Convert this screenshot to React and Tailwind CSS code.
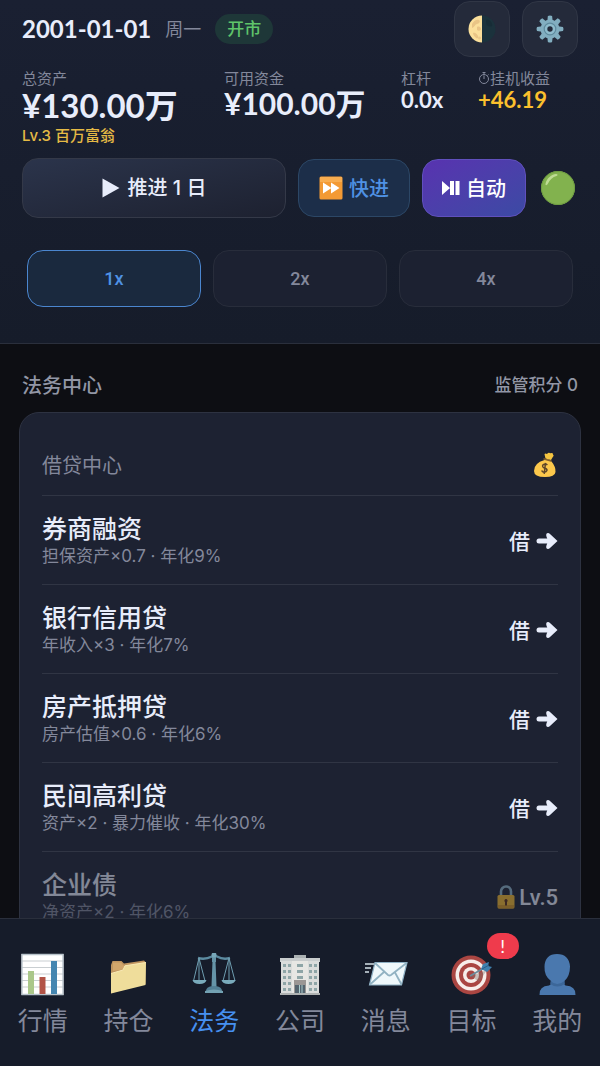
import { useState } from 'react';
import clsx from 'clsx';

function MoonIcon() {
    return (
        <svg viewBox="0 0 28 28" className="w-7 h-7" aria-hidden="true">
            <circle cx="14" cy="14" r="13.500" fill="#1b323c" />
            <path d="M14 .5a13.500 13.500 0 0 0 0 27z" fill="#fbdf9b" />
            <path d="M4 9c2-4 5-5 7-4s0 4-2 4-2 3-5 4zM9 12c2-1 4 0 4 2s-3 2-4 1zM5 18c2-1 4 1 5 3s-1 3-2 2-3-3-3-5z" fill="#e9c486" />
            <circle cx="11.500" cy="23" r="1.500" fill="#ecc98a" />
            <path d="M18 5c3-1 5 1 6 4s-2 3-4 2-2-4-2-6z" fill="#172c36" />
        </svg>
    );
}

function GearIcon() {
    return (
        <svg viewBox="0 0 28 28" className="w-7 h-7" aria-hidden="true">
            <g fill="#82aec0">
                {[0, 45, 90, 135, 180, 225, 270, 315].map(deg => (
                    <path key={deg} d="M11.300 6 11.900 1Q14 0 16.100 1L16.700 6z" transform={`rotate(${deg} 14 14)`} />
                ))}
                <circle cx="14" cy="14" r="9.500" />
            </g>
            <circle cx="14" cy="14" r="5.800" fill="#8fbccd" stroke="#5f8b9e" strokeWidth="1.200" />
            <circle cx="14" cy="14" r="2.700" fill="#242b3b" />
        </svg>
    );
}

function StopwatchIcon() {
    return (
        <svg viewBox="0 0 12 14" className="w-3 h-3.5" fill="none" stroke="currentColor" strokeWidth="1" aria-hidden="true">
            <circle cx="6" cy="8" r="4.500" />
            <path d="M6 8V4.500M6 3.500V1.500M4.500 1.500h3M9.500 4.500l1-1" />
        </svg>
    );
}

function FastForwardIcon() {
    return (
        <svg viewBox="0 0 24 24" className="w-6 h-6" aria-hidden="true">
            <rect x=".5" y=".5" width="23" height="23" rx="1.500" fill="#f39a34" />
            <path d="M1 1h22v5H1z" fill="#f8ad50" />
            <path d="M4 6.500 12.500 12 4 17.500zM12 6.500 20.500 12 12 17.500z" fill="#fff" />
        </svg>
    );
}

function PlayPauseIcon() {
    return (
        <svg viewBox="0 0 18 14" className="w-[18px] h-3.5" fill="currentColor" aria-hidden="true">
            <path d="M0 0 8 7 0 14zM8 0h4v14H8zM13.500 0h4v14h-4z" />
        </svg>
    );
}

function GreenDot() {
    return (
        <svg viewBox="0 0 36 36" className="w-9 h-9" role="img" aria-label="运行中">
            <circle cx="18" cy="18" r="17" fill="#82b24e" />
            <circle cx="18" cy="18" r="16.500" fill="none" stroke="#6f9d42" />
            <path d="M5.500 14C6.500 8.500 11 4.500 16 4c2 0 2 1.500.5 2-4 1.200-6.500 3.500-8.500 7.500-1 2-2.800 2.300-2.500.5z" fill="#bedc94" />
        </svg>
    );
}

function MoneyBagIcon() {
    return (
        <svg viewBox="0 0 26 26" className="w-[26px] h-[26px]" role="img" aria-label="资金">
            <path d="M13.500 6.500 12.500 2.200Q13 1 15 2q1.500-2 3.500-.7 2.500-.8 2.500 1.200 1.500 1-.2 2.500L19 8z" fill="#f5c541" />
            <path d="M12.500 8Q17 6 19.500 9.500 24 15 23.500 20q-.5 5-10.500 5-11 0-11-6 0-8 10.500-11z" fill="#fcc84c" />
            <path d="m12 7 7 2" stroke="#85602a" strokeWidth="1.500" strokeLinecap="round" />
            <path d="M15.300 13.200q-1-1.500-3-1-2.200.7-1.500 2.500.5 1.200 2.300 1.500 2.200.5 1.800 2.400-.7 1.900-3 1.600-1.700-.2-2.200-1.700M13.500 10.800l-1.300 11" fill="none" stroke="#60472a" strokeWidth="1.500" />
        </svg>
    );
}

function LockIcon() {
    return (
        <svg viewBox="0 0 18 24" className="w-[18px] h-6" aria-hidden="true">
            <path d="M4 11V6.500a5 5 0 0 1 10 0V11" fill="none" stroke="#8eb4c8" strokeWidth="2.600" />
            <rect x=".5" y="10" width="17" height="13.500" rx="1.500" fill="#f5b92e" />
            <path d="M1 20h16v2q0 1.500-1.500 1.500h-13Q1 23.500 1 22z" fill="#d99a22" />
            <path d="M9 14a1.700 1.700 0 0 1 1 3v3.500H8V17a1.700 1.700 0 0 1 1-3z" fill="#5c2f16" />
        </svg>
    );
}

function ArrowIcon() {
    return (
        <svg viewBox="0 0 22 18" className="w-[22px] h-[18px]" aria-hidden="true">
            <path d="M3 9h10" stroke="currentColor" strokeWidth="5" strokeLinecap="round" />
            <path d="M10.300 4Q9.800 1.200 12 1q1 0 2 1l7.500 7-7.500 7q-1 1-2 1-2.200-.2-1.700-3L12 9z" fill="currentColor" />
        </svg>
    );
}

function ChartIcon() {
    return (
        <>
            <path d="M.5 1h42v41H.5z" fill="#fff" />
            <path d="M1 8h41M1 14.500h41M1 21h41M1 27.500h41M1 34h41" stroke="#c9ced1" strokeWidth="1" />
            <path d="M1 1.500h41v40H1z" fill="none" stroke="#b8c3cb" strokeWidth="1.300" />
            <path d="M7 18h6v23H7z" fill="#aac78a" />
            <path d="M18.500 24h6v17h-6z" fill="#b25447" />
            <path d="M30 8h6v33h-6z" fill="#4586b0" />
        </>
    );
}

function FolderIcon() {
    return (
        <>
            <path d="M4 12 5.500 8h9L17 10.500 37 7.500 38.500 9v22L4 40z" fill="#bf9560" />
            <path d="M6 9.500h8l2.500 3L37 9v4L6 18z" fill="#d1a66c" />
            <path d="M4 20.500 16 17l2-4.200L39 9.500 38.500 32 4 40.500z" fill="#efdd9b" />
            <path d="M4 20.500 16 17l2-4.200L39 9.500" fill="none" stroke="#f8eab5" />
        </>
    );
}

function ScalesIcon() {
    return (
        <>
            <path d="M6 5Q13 7 20 3.500q3-1 5 0Q31 7 38 5" fill="none" stroke="#5c8ba0" strokeWidth="2.500" />
            <path d="M20 2h4v7h-4zM20.500 8h3l1 25h-5z" fill="#6594a8" />
            <circle cx="22" cy="2" r="2.500" fill="#78a8b9" />
            <path d="M7 5 1.500 28M7 5l6 23M7 5v22M37 5l-6 23M37 5l6 23M37 5v22" fill="none" stroke="#6e9db0" strokeWidth="1" />
            <path d="M.5 27h14q-1 4-7 4t-7-4zM29.500 27h14q-1 4-7 4t-7-4z" fill="#79aabb" />
            <path d="M14 38q0-4 6-5h4q6 1 6 5z" fill="#527f95" />
            <path d="M13 38q9-3 18 0v2H13z" fill="#73a1b2" />
        </>
    );
}

function OfficeIcon() {
    return (
        <g transform="translate(1 1)">
            <path d="M15 1h12v4H15z" fill="#aab0b2" />
            <path d="M1 4h40v4H1z" fill="#c8cccd" />
            <path d="M2 7h38v33H2z" fill="#dadcdb" />
            <path d="M13 7h16v33H13z" fill="#e7e7e4" />
            {[10, 16, 22, 28, 34].map(y => (
                <path key={y} d={`M4 ${y}h3v3H4zM9 ${y}h3v3H9zM18 ${y}h6v3h-6zM30 ${y}h3v3h-3zM35 ${y}h3v3h-3z`} fill="#8ea5a7" />
            ))}
            <path d="M15 26h12v14H15z" fill="#9a9694" />
            <path d="M16 31h10v9H16z" fill="#53636e" />
            <path d="M20.500 31v9M23 31v9" stroke="#acc" />
            <path d="M1 39h40v2H1z" fill="#aeb1b1" />
        </g>
    );
}

function MailIcon() {
    return (
        <>
            <path d="M1 11h9M1 15h6M1 19h4" stroke="#d5e1e8" strokeWidth="1.400" />
            <path d="M11 9.500h32L37.500 32h-32z" fill="#eff8fb" stroke="#8eb0c4" strokeWidth="1.200" />
            <path d="m11 10 13 12q1.500 1 3 0L42.500 10M6 31.500 20 19M37.500 31.500 31 19.500" fill="none" stroke="#91b2c2" strokeWidth="1.800" />
        </>
    );
}

function TargetIcon() {
    return (
        <>
            <circle cx="22" cy="22" r="19.500" fill="#aa4642" />
            <circle cx="22" cy="22" r="15.500" fill="#f7eeea" />
            <circle cx="22" cy="22" r="12" fill="#aa4642" />
            <circle cx="22" cy="22" r="8" fill="#f7eeea" />
            <circle cx="22" cy="22" r="4.500" fill="#aa4642" />
            <path d="m22 23 8 6 8-12z" fill="#81746f" opacity=".4" />
            <path d="m21 23 14-8" stroke="#6c8d9c" strokeWidth="2" />
            <path d="m32 16 2-5 6-2-1 4 4 1-5 5z" fill="#3f80ad" />
            <path d="m33 16 7-4" stroke="#285e89" />
        </>
    );
}

function PersonIcon() {
    return (
        <g transform="translate(1 1)">
            <path d="M21 0q12 0 13 12.500Q34 22 28.500 27q-1 3 1 4.500Q40 32 39.500 41h-36Q3 32 13 31.500q3-1.500 2-4.500Q8 22 8.500 12.500 9 0 21 0z" fill="#4a78ae" />
            <path d="M14.500 27q6.500 6 14 0l.3 3q-7.300 5-14.600 0z" fill="#3c6799" />
        </g>
    );
}

const speeds = ['1x', '2x', '4x'];

const loans = [
    { name: '券商融资', desc: '担保资产×0.7 · 年化9%' },
    { name: '银行信用贷', desc: '年收入×3 · 年化7%' },
    { name: '房产抵押贷', desc: '房产估值×0.6 · 年化6%' },
    { name: '民间高利贷', desc: '资产×2 · 暴力催收 · 年化30%' },
    { name: '企业债', desc: '净资产×2 · 年化6%', locked: 'Lv.5' },
];

const tabs = [
    { id: 'market', label: '行情', icon: ChartIcon },
    { id: 'holdings', label: '持仓', icon: FolderIcon },
    { id: 'legal', label: '法务', icon: ScalesIcon },
    { id: 'company', label: '公司', icon: OfficeIcon },
    { id: 'news', label: '消息', icon: MailIcon },
    { id: 'goals', label: '目标', icon: TargetIcon, badge: '!' },
    { id: 'me', label: '我的', icon: PersonIcon },
];

function Header() {
    const [speed, setSpeed] = useState('1x');

    return (
        <header className="shrink-0 border-b border-[#2a2f3c] bg-linear-to-b from-[#1a2032] to-[#161c2a] px-[22px] pt-px pb-9">
            <div className="flex items-center">
                <h1 className="text-2xl font-bold">2001-01-01</h1>
                <span className="ml-3.5 text-lg text-[#83889b]">周一</span>
                <span className="ml-3.5 rounded-full bg-[#1e3738] px-3 py-0.5 text-[17px] leading-[26px] font-medium text-[#5fc46a]">开市</span>
                <div className="ml-auto flex gap-3">
                    <button type="button" aria-label="切换主题" className="flex size-14 items-center justify-center rounded-2xl border border-[#303645] bg-[#242a3a]">
                        <MoonIcon />
                    </button>
                    <button type="button" aria-label="设置" className="flex size-14 items-center justify-center rounded-2xl border border-[#303645] bg-[#242a3a]">
                        <GearIcon />
                    </button>
                </div>
            </div>

            <dl className="mt-[11px] grid grid-cols-[202fr_177fr_77fr_100fr] whitespace-nowrap font-bold">
                <div>
                    <dt className="text-[15px] leading-5 font-normal text-[#83889b]">总资产</dt>
                    <dd className="text-[33px] leading-[34px]">¥130.00万</dd>
                    <dd className="mt-1 font-['Inter','Noto_Sans_CJK_SC',sans-serif] text-[15px] leading-5 font-medium text-[#e5ba45]">Lv.3 百万富翁</dd>
                </div>
                <div>
                    <dt className="text-[15px] leading-5 font-normal text-[#83889b]">可用资金</dt>
                    <dd className="text-[30px] leading-[30px]">¥100.00万</dd>
                </div>
                <div>
                    <dt className="text-[15px] leading-5 font-normal text-[#83889b]">杠杆</dt>
                    <dd className="text-[22px] leading-6">0.0x</dd>
                </div>
                <div>
                    <dt className="flex items-center text-[15px] leading-5 font-normal text-[#83889b]">
                        <StopwatchIcon />
                        挂机收益
                    </dt>
                    <dd className="text-[22px] leading-6 text-[#fbc02d]">+46.19</dd>
                </div>
            </dl>

            <div className="mt-3 flex items-center gap-3 text-xl font-medium">
                <button type="button" className="flex h-[60px] flex-1 items-center justify-center gap-2 rounded-2xl border border-[#343948] bg-linear-to-br from-[#2b344b] to-[#1d2130]">
                    <svg viewBox="0 0 18 20" className="w-[18px] h-5" fill="currentColor" aria-hidden="true">
                        <path d="M.5.5 17.500 10 .5 19.500z" />
                    </svg>
                    <span className="font-['Inter','Noto_Sans_CJK_SC',sans-serif]">推进 1 日</span>
                </button>
                <button type="button" className="flex h-[58px] items-center gap-1.5 rounded-2xl border border-[#2c4766] bg-[#1c2e49] px-5 text-[#4f91e3]">
                    <FastForwardIcon />
                    快进
                </button>
                <button type="button" className="flex h-[58px] items-center gap-1.5 rounded-2xl border border-[#6050bd] bg-linear-to-br from-[#5832b0] to-[#3b4aa4] px-[19px] text-white">
                    <PlayPauseIcon />
                    自动
                </button>
                <div className="px-0.5">
                    <GreenDot />
                </div>
            </div>

            <div className="mt-8 flex gap-3 px-[5px]">
                {speeds.map(s => (
                    <button
                        key={s}
                        type="button"
                        aria-pressed={s === speed}
                        onClick={() => setSpeed(s)}
                        className={clsx(
                            "h-[57px] flex-1 rounded-2xl border font-['Roboto',sans-serif] text-lg font-medium",
                            s === speed ? 'border-[#4b86cf] bg-[#1a293e] text-[#4f91e3]' : 'border-[#282d3b] bg-[#1c2131] text-[#83889b]'
                        )}
                    >
                        {s}
                    </button>
                ))}
            </div>
        </header>
    );
}

function LoanRow({ loan }) {
    return (
        <li className="border-t border-[#303544]">
            <div className={clsx('flex items-center justify-between pt-[17px] pb-[15px]', loan.locked && 'opacity-50')}>
                <div>
                    <h3 className="text-[25px] leading-[30px] font-medium">{loan.name}</h3>
                    <p className="font-['Inter','Noto_Sans_CJK_SC',sans-serif] text-[17px] leading-[26px] text-[#83889b]">{loan.desc}</p>
                </div>
                {loan.locked ? (
                    <span className="flex items-center gap-1 font-['Roboto',sans-serif] text-[22px] font-medium">
                        <LockIcon />
                        {loan.locked}
                    </span>
                ) : (
                    <button type="button" className="flex items-center gap-1.5 text-[21px] font-medium">
                        借
                        <ArrowIcon />
                    </button>
                )}
            </div>
        </li>
    );
}

function TabBar() {
    const [active, setActive] = useState('legal');

    return (
        <nav className="grid shrink-0 grid-cols-7 border-t border-[#2a2f3c] bg-[#161c2a] pt-[34px] pb-7">
            {tabs.map(tab => {
                const Icon = tab.icon;
                return (
                    <a
                        key={tab.id}
                        href={`#${tab.id}`}
                        onClick={() => setActive(tab.id)}
                        className={clsx('relative flex flex-col items-center gap-[5px]', tab.id === active ? 'text-[#4690f0]' : 'text-[#83889b]')}
                    >
                        <svg viewBox="0 0 44 44" className="size-11" aria-hidden="true">
                            <Icon />
                        </svg>
                        <span className="text-[25px] leading-9">{tab.label}</span>
                        {tab.badge && (
                            <span className="absolute -top-5 left-[58px] w-8 rounded-full bg-[#ef3b4c] text-center text-lg leading-[26px] text-white">
                                {tab.badge}
                            </span>
                        )}
                    </a>
                );
            })}
        </nav>
    );
}

export default function App() {
    return (
        <div className="flex h-screen flex-col bg-[#0d0e13] font-['Lato','Noto_Sans_CJK_SC',sans-serif] text-[#e8edfb]">
            <Header />
            <main className="min-h-0 flex-1 overflow-hidden px-[19px] pt-[27px]">
                <div className="flex items-center justify-between px-[3px] font-medium text-[#9296a5]">
                    <h2 className="text-xl leading-7">法务中心</h2>
                    <span className="font-['Inter','Noto_Sans_CJK_SC',sans-serif] text-[17px] leading-7">监管积分 0</span>
                </div>
                <section className="mt-[13px] rounded-[20px] border border-[#2d3241] bg-[#1d2232] px-[22px] pt-[37px] pb-6">
                    <div className="flex items-center justify-between pb-[15px]">
                        <h3 className="text-xl leading-[30px] text-[#83889b]">借贷中心</h3>
                        <MoneyBagIcon />
                    </div>
                    <ul>
                        {loans.map(loan => (
                            <LoanRow key={loan.name} loan={loan} />
                        ))}
                    </ul>
                </section>
            </main>
            <TabBar />
        </div>
    );
}
